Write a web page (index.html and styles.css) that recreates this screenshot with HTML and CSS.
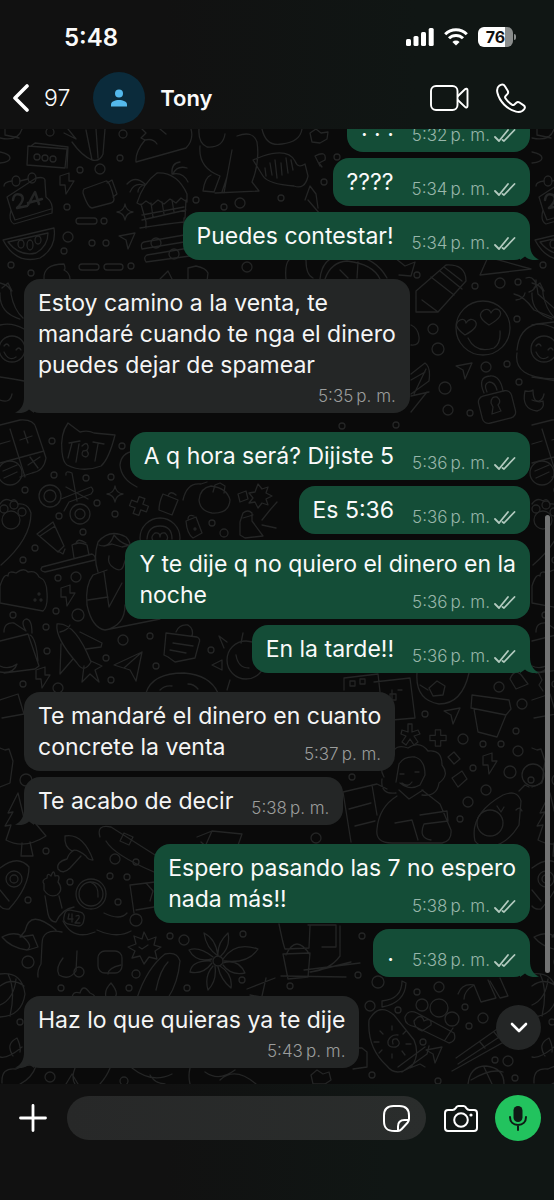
FILE: index.html
```html
<!DOCTYPE html>
<html lang="es">
<head>
<meta charset="utf-8">
<meta name="viewport" content="width=device-width, initial-scale=1">
<title>Tony</title>
<link rel="stylesheet" href="styles.css">
</head>
<body>
<div class="app">
  <svg class="defs" aria-hidden="true">
    <symbol id="ticks" viewBox="0 0 22 15"><path d="M1 9l4 4L14 2M8.500 12l1.500 1L20.500 2" fill="none" stroke="currentColor" stroke-width="1.800" stroke-linecap="round" stroke-linejoin="round"/></symbol>
    <symbol id="tail-out" viewBox="0 0 20 20"><path d="M10 0v4c0 8 3 13 9 15.500-6 1.500-11 0-14-3L0 20V0z" fill="currentColor"/></symbol>
    <symbol id="tail-in" viewBox="0 0 20 20"><path d="M10 0v4c0 8-3 13-9 15.500 6 1.500 11 0 14-3l5 3.500V0z" fill="currentColor"/></symbol>
  </svg>

  <header class="top">
    <div class="status">
      <span class="clock">5:48</span>
      <div class="status-icons">
        <svg width="28" height="18" viewBox="0 0 28 18" fill="#fff"><rect y="11" width="5" height="7" rx="1.500"/><rect x="7.500" y="8" width="5" height="10" rx="1.500"/><rect x="15" y="4" width="5" height="14" rx="1.500"/><rect x="22.700" width="5" height="18" rx="1.500"/></svg>
        <svg width="24" height="18" viewBox="0 0 24 18" fill="none" stroke="#fff" stroke-width="3"><path d="M1.200 6.200a15.300 15.300 0 0 1 21.600 0"/><path d="M5 10.300a9.900 9.900 0 0 1 14 0"/><path d="M12 17.500l-3.600-3.600a5.100 5.100 0 0 1 7.200 0z" fill="#fff" stroke="none"/></svg>
        <span class="battery"><span class="charge">76</span></span>
      </div>
    </div>
    <div class="bar">
      <button class="icon back" aria-label="Atrás"><svg width="18" height="28" viewBox="0 0 18 28" fill="none" stroke="#fff" stroke-width="3.600" stroke-linecap="round" stroke-linejoin="round"><path d="M15 2L3 14l12 12"/></svg><span>97</span></button>
      <span class="avatar"><svg width="18" height="18" viewBox="0 0 18 18" fill="#54b9ec"><circle cx="9" cy="4.500" r="4"/><path d="M1 17.500v-2C1 12.500 5 11 9 11s8 1.500 8 4.500v2z"/></svg></span>
      <h1 class="name">Tony</h1>
      <button class="icon video" aria-label="Videollamada"><svg width="39" height="26" viewBox="0 0 39 26" fill="none" stroke="#fff" stroke-width="1.900" stroke-linejoin="round"><rect x="1" y="1" width="26.500" height="24" rx="5"/><path d="M27.500 11.500l7.500-7.200c1-1 2.500-.8 2.500.8v16c0 1.600-1.500 1.800-2.500.8l-7.500-7.200"/></svg></button>
      <button class="icon" aria-label="Llamar"><svg width="30" height="30" viewBox="0 0 30 30" fill="none" stroke="#fff" stroke-width="2" stroke-linejoin="round"><path d="M3.200 2.800C1 4.500.8 7.200 1.400 9.800 3.500 18.600 11.500 26.500 20 28.600c3.200.8 6.500 0 8.300-2.600.9-1.400.7-2.700-.6-3.600l-4.200-2.900c-1.200-.8-2.200-.7-3.200.2l-2.200 2c-.7.600-1.400.5-2.200 0-2.700-1.800-4.800-3.900-6.500-6.500-.5-.8-.5-1.400.1-2.100l2-2.200c.8-1 .9-2 .2-3.200L8.800 3c-1.200-2.200-3.600-2-5.600-.2z"/></svg></button>
    </div>
  </header>

  <main class="chat">
    <svg class="wallpaper" viewBox="0 129 554 955" preserveAspectRatio="xMidYMin slice" aria-hidden="true">
      <defs>
        <path id="bolt" d="M-6-8L3-11l0 8h5L0 10l-1-9h-5z"/>
        <path id="spark" d="M0-8Q1-1 8 0 1 1 0 8-1 1-8 0-1-1 0-8z"/>
        <path id="plane" d="M-8-5L8-8 1 8-1-1z"/>
        <path id="cross" d="M-3-9h6v6h6v6H3v6h-6V3h-6v-6h6z"/>
        <g id="tile">
          <path d="M0 138q18 4 22-9M5 129v6l14 3M28 146l39 3-2 19-38-3zM31 146l4-3 33 4-1 21"/>
          <circle cx="37" cy="157" r="3"/><circle cx="45" cy="158" r="3"/><circle cx="53" cy="159" r="3"/>
          <path d="M64 133l12 6-8-10M72 142q10 14 20 18l-6-30M92 160q8 2 11-6l2-25M98 158l-2-29M0 152q10 2 10 6t-10 5"/>
          <path d="M4 186q0-4 8-5M20 181l8-2M36 178q10-2 9 4l1 15q8 6 6 16L14 224q-6-3-3-14L7 197zM11 210l4 10 36-11"/>
          <ellipse cx="16" cy="181" rx="4" ry="5"/><ellipse cx="32" cy="178" rx="4" ry="5"/>
          <path d="M13 200q1-8 8-5 5 4-4 13l10-2M28 205l7-13 4 12M28 203l14-4" stroke-width="2.500"/>
          <use href="#bolt" x="66" y="184"/>
          <path d="M84 189l22-8q4 0 8 18 0 3-3 4l-19 5q-4 0-9-15 0-3 1-4zM107 183l5-3 5 14-4 3"/>
          <path d="M137 203q6-20 20-30 20-1 30 21v8l-6-4-5 5-6-4-6 5-6-4-6 5-6-4-5 4zM141 204l5 18M186 200l-1 18M142 215l42-8M142 220l44-10M151 203l2 14M162 202l2 12M172 200l2 12M140 228q25-4 44-6M127 184q8-9 18 0M130 192q4-10 14-7M138 192q0-5 6-7M172 174q-1-11 8-12M173 174q4-9 14-6M173 174q10-2 15 8M146 222v6M184 218v6"/>
          <use href="#spark" x="125" y="212"/>
          <rect x="76" y="218" width="21" height="6" rx="3"/><rect x="79" y="264" width="20" height="6" rx="3"/><rect x="104" y="264" width="19" height="6" rx="3"/>
          <path d="M3 240l51-12q3 20-14 30-24 7-37-18zM8 242l40-9q0 13-12 20-16 4-28-11z"/>
          <ellipse cx="21" cy="244" rx="3" ry="4"/><ellipse cx="30" cy="245" rx="3" ry="5"/><ellipse cx="38" cy="240" rx="3" ry="4"/>
          <use href="#plane" x="127" y="241"/>
          <path d="M144 242q-4 1-2 7l48-8M144 242l46-8M147 255q-4 2-1 7l44-6M147 255l42-7"/><circle cx="156" cy="243" r="5"/><circle cx="174" cy="254" r="5"/>
          <path d="M44 279q-1-15 20-15 2 5 0 6 6 3 6 9M160 279l8-8 4 8M188 279v-11l8-2q10 2 12 7l-1 8"/>
          <path d="M0 283q12 3 11 11 3 16 12 24M0 293q-1 20 20 26M2 288l6-5 4 8M0 325q12-3 24 4M0 377q14 2 24 4M0 400q10 4 12-6"/>
          <circle cx="12" cy="349" r="13"/><path d="M4 346q3-4 5 0M16 350q3-4 5 0M4 352q5 10 12 5"/>
          <path d="M0 425l20-5q14-1 16 8l10 30q-2 13-14 15l-12 4M10 429l15 48M0 463l44-12M0 444l10-3M20 440l12-4M24 431l4 12M28 465l12-8M30 457l8 11"/><circle cx="10" cy="473" r="12"/><path d="M3 471l14-6M4 478l13-6"/>
          <path d="M62 452q-2-18 6-29l12 9q8-2 14 1l21 2q-6 24-14 31-18 7-34-1-4-3-5-13zM69 443l11-2M72 443l-4 15M79 444l-3 18M93 442l11 2M98 444l-3 17"/><path d="M82 446q5-5 6 0t-5 5q-3 5 3 6 4-2 1-6"/>
          <circle cx="50" cy="496" r="11"/><circle cx="50" cy="496" r="6"/><circle cx="80" cy="514" r="10"/><circle cx="80" cy="514" r="5"/>
          <path d="M66 487l22 12M66 475q-1-5 6-2l5 28M61 499l30-12q4 3 0 7l-22 8-5 9"/>
          <use href="#spark" x="115" y="494"/>
          <use href="#cross" transform="translate(139 506) rotate(20)"/>
          <path d="M163 494l15 6-6 15-13-5q0-8 4-16zM168 496q2-6 8-1M137 487q-16-8-17-22 1-12 14-14"/>
          <path d="M0 504q5-7 11-3 4-4 7 3 10-1 13 9 0 26-30 52"/><circle cx="11" cy="520" r="9"/><circle cx="4" cy="509" r="4"/><circle cx="14" cy="505" r="4"/><circle cx="22" cy="512" r="4"/>
          <path d="M37 534l16-12 11 24-6 6zM40 536l15-10M58 551l5 3 2-5M42 567l50-13q4 2 3 6l-50 12q-6-1-3-5zM74 558l-2-13q7-4 15 0l2 10M76 544q1-7 10-1"/>
          <path d="M98 572q-5-15 0-30 12-14 28-5 4 4 5 11-5 8-7 16-2 9-10 4-7-4-5-12M99 545q10 4 15-10 6 8 14 10M104 546l8-2 10 3 8-2M107 570l-14 5q-8 10-6 30 5 23 18 25l55-11M88 600l20-3M104 572l5 35 13-24M105 630q20-4 20-25"/>
          <circle cx="160" cy="538" r="20"/><path d="M147 539q1-13 13-13t12 13M160 546q-13-7-5-13 5-1 5 4 0-5 5-4 7 6-5 13z"/>
          <path d="M183 500q4-18 18-16l6-2M199 500q1-12 12-14 16 2 19 14-1 14-18 13-12-2-13-13zM213 492l2-7 5-2 5 3-1 7M238 494l8-3 2 8-8 3zM258 484l4 5 6-2-2 6 6 3-6 3 2 6-6-2-4 5-3-6-6 1 4-5-4-5 6-1z"/>
          <path d="M186 521l10-4 6 16-9 5q-6-4-7-17zM188 519q0-5 6-3M240 535v-13l3-9q5-4 9 0v8l11 15-18 2zM243 518l10-3M262 520l8-10 7-8M262 525l14 3"/>
          <path d="M0 586q4-13 8-10 0-6 8-3 8-6 12-1 8-2 11 5 8 3 8 16 1 14-4 18l-43-8z"/><circle cx="39" cy="594" r="1"/><circle cx="35" cy="600" r="1"/><circle cx="41" cy="600" r="1"/>
          <use href="#bolt" x="67" y="596"/>
          <path d="M0 641l28-7 11 32-4 3-31 4M30 635q6 3 8 26M0 672q14 2 17-8-8 6-17 2M4 632q0-10 10-9l12 8q-6-10 0-12 6 0 6 14"/>
          <path d="M57 624q18-2 34 38-7 12-14 1-22-25-20-39zM60 632q8-2 10-7M80 632l22 11-1 4-15 2M61 644l-1 30 13-15M84 666l-2 16 8-8 9 8-4-12 7-4-11-5"/>
          <path d="M114 665l28-13-6 29-6-11zM142 652l-18 16M166 633l31 4q4 2 2 6l-4 15-20 4-7-5-4-2zM176 632q3-8 12-7 6 4 4 11M173 643l20 3M170 650l16 3"/>
          <path d="M146 693q6-20 38-20 26 2 34 20M160 690q5-5 12-4M188 684q6 0 10 5"/>
          <circle cx="246" cy="660" r="19"/><path d="M236 655q2 13 13 13M243 633l-2 10M227 642l-8-6 5 12M212 665l10-5v10zM230 680l-3 10"/>
          <use href="#bolt" x="42" y="678"/>
          <path d="M0 700l18-6 6 20-22 4M0 748l5 2 4-1 4 12-3 22-10 4M24 818l-6-25-10 20 5-1-8 14 6-1-5 15q18 10 40-4l-10-12M22 843l-1 13h12l-3-14"/>
          <path d="M65 836q18-3 28 24-5 0-7-4-10-8-14-5-8-4-7-15zM73 851q-4 2-6 8-11 3-9 10 5 6 12-1l11-12"/>
          <path d="M0 868q18-14 29-1 0 20-20 42-6 1-9-3M0 890l9 11"/><circle cx="14" cy="879" r="8"/><circle cx="14" cy="879" r="4"/>
          <circle cx="91" cy="894" r="15"/><circle cx="91" cy="894" r="12"/><path d="M90 882q9 3 8 15"/>
          <path d="M44 884q-3-4 3-6 0-6 4-2 3-8 4 0 6-2 3 6 6 8-1 13-8 3-13-5zM45 896l3 18q2 8 8 8 6-13 18-15M59 896l3 12M104 913q16 8 23 0M97 930q20 9 34 1M63 921q10 20 32 11"/>
          <rect x="64" y="911" width="20" height="14" rx="5" transform="rotate(12 74 918)"/><path d="M69 914l-1 5h5M72 914v8M76 916q4-2 3 2l-4 5h5"/>
          <circle cx="136" cy="920" r="6"/><path d="M134 913l-4-28 25-3M146 883l7 8-3 10M136 910l18-3"/>
          <path d="M56 930q-26-22-31 1l-5 6M2 937q12-6 20-1 12 10 5 14-16-2-25-13zM20 937l13-2 5 12-10 3M62 932q-20-4-20 12l-1 20q-4 6-3 13M63 958q-8 10-4 17 10 6 17-4l1-20"/>
          <path d="M144 932l4 8 8-3-2 8 7 2-6 4 2 8-8-2-5 7-4-8-8 2 3-7-7-4 8-3-2-8 8 3zM139 947l3 2 6-4"/>
          <rect x="98" y="951" width="24" height="22" rx="7"/><path d="M108 974q0-6 13-9M137 998q10-30 28-44 12-3 15 7-2 22-12 37M156 990q4-20 12-28"/>
          <circle cx="218" cy="961" r="5"/><path d="M218 956q-12-8-14-23 12 6 14 23M218 956q-1-13 10-23 3 14-8 24M223 959q12-18 35-10-10 15-34 12M223 963q15-5 22 10-14 3-22-8M220 966q13 8 11 22-10-8-13-21M215 966q2 15-7 24-4-14 5-24M212 963q-9 12-22 9 2-12 21-11M212 959q-16 4-23-9 10-4 24 7"/>
          <path d="M0 974q22-3 25 20-3 22-25 23M0 986q12-9 24 0M0 1005q14-6 16-26M8 974q8 16 2 42M0 1057q8 2 22-10M13 1056q-8-12 4-18 4 8 3 14M2 1083q-1-16 14-14 12-6 20-3-4 12-16 18M72 1000q0-10 8-7 3-10 10 0 8 3 3 7zM106 997q-2-7 5-14 8 10 4 14"/>
          <path d="M247 989l28-11M250 995l22 4M266 978l-4 18M66 1084l6-10 6 10M75 1068q-4 10 0 16M110 1068q-3 8-10 16M132 1068q20 16 40 6M150 1075q4 8 15 9M190 1068q-2 8 0 16M220 1080q15-14 36 4M205 1072q14 10 30-2"/>
          <g class="dots">
            <circle cx="50" cy="132" r="4"/><circle cx="123" cy="134" r="4"/><circle cx="120" cy="158" r="3"/><circle cx="80" cy="170" r="3"/><circle cx="100" cy="169" r="5"/><circle cx="67" cy="207" r="3"/><circle cx="104" cy="221" r="3"/><circle cx="68" cy="237" r="5"/><circle cx="92" cy="243" r="3"/><circle cx="106" cy="243" r="3"/><circle cx="64" cy="251" r="3"/><circle cx="11" cy="265" r="3"/><circle cx="31" cy="273" r="3"/><circle cx="131" cy="266" r="3"/>
            <circle cx="52" cy="441" r="3"/><circle cx="122" cy="446" r="3"/><circle cx="54" cy="475" r="3"/><circle cx="86" cy="478" r="3"/><circle cx="111" cy="477" r="3"/><circle cx="25" cy="490" r="3"/><circle cx="97" cy="503" r="3"/><circle cx="59" cy="516" r="3"/><circle cx="115" cy="514" r="3"/><circle cx="83" cy="532" r="3"/><circle cx="35" cy="548" r="3"/><circle cx="23" cy="560" r="3"/><circle cx="58" cy="578" r="3"/><circle cx="76" cy="577" r="5"/><circle cx="13" cy="615" r="3"/><circle cx="56" cy="611" r="3"/><circle cx="78" cy="615" r="6"/><circle cx="46" cy="627" r="3"/><circle cx="123" cy="640" r="5"/><circle cx="150" cy="636" r="3"/><circle cx="47" cy="651" r="3"/><circle cx="106" cy="658" r="3"/><circle cx="156" cy="666" r="3"/><circle cx="211" cy="650" r="3"/><circle cx="23" cy="684" r="3"/><circle cx="58" cy="688" r="5"/><circle cx="111" cy="680" r="3"/><circle cx="212" cy="523" r="3"/><circle cx="224" cy="533" r="4"/><circle cx="195" cy="529" r="1"/>
            <circle cx="26" cy="780" r="6"/><circle cx="46" cy="851" r="3"/><circle cx="115" cy="859" r="5"/><circle cx="136" cy="862" r="3"/><circle cx="110" cy="876" r="3"/><circle cx="127" cy="877" r="3"/><circle cx="70" cy="882" r="3"/><circle cx="28" cy="900" r="3"/><circle cx="118" cy="902" r="3"/><circle cx="170" cy="936" r="3"/><circle cx="184" cy="940" r="5"/><circle cx="28" cy="962" r="6"/><circle cx="79" cy="972" r="5"/><circle cx="136" cy="974" r="4"/><circle cx="61" cy="988" r="3"/><circle cx="129" cy="988" r="3"/><circle cx="187" cy="988" r="3"/><circle cx="242" cy="980" r="3"/><circle cx="243" cy="934" r="3"/><circle cx="50" cy="1077" r="5"/><circle cx="124" cy="1081" r="4"/><circle cx="20" cy="1022" r="3"/>
          </g>
        </g>
      </defs>
      <g class="doodles">
        <use href="#tile"/><use href="#tile" x="532"/>
        <path d="M142 129l4 4-5 5 4 2q-10 12-9 22l50-14q8-8 5-19M145 140q8-2 12 4M160 129l6 5M199 129q-1 14 8 18 16 1 18-13M200 146q-2 22 20 30M220 176l-6 16-11-1q2-14 8-16M227 177l-5 15M232 150l-8 43M237 136q16-6 20 6 3 20-5 40l7 9-44 2M253 160l10-4q25-8 32 5 3 8 10 3l3 12q-3 14-14 10-26-2-31-10z"/>
        <path d="M265 168l1 8M270 163l2 12M275 160l2 18M281 163l1 12M286 158l2 15M291 160l2 10M262 129q4 18 20 15 18-2 20-15M310 133l6-4 5 4 7-1-1 7-7 4-8-1zM315 156q12-6 10 4l-6 3 3 4M315 156l5 10M305 200l5-14 6 8 2 14M308 200l12 14"/>
        <path d="M416 312v-21l30-26q20-1 20 16l-28 31zM438 312l-16-12M440 271l22 18M431 277l23 18M444 267l18 14"/>
        <circle cx="483" cy="328" r="27"/><path d="M465 335q-14-10-5-15 5-2 6 3 4-6 9-2 5 6-10 14zM489 325q-14-9-5-15 5-2 7 3 3-6 8-3 6 6-10 15zM468 338q8 16 26 10 7-5 6-17M480 275l8-18 43 12zM514 294q10 2 20 16l20 8M516 300q8-1 9-7M526 278q10-4 12 16l16 14M529 292q8-2 7-12"/>
        <path d="M517 350q2-22 20-26l17-2M517 353q-4 25 37 26M411 325q7 3 8 12t-8 8M411 374l14-11q6 4 4 18l-18 13M411 380l14-8M414 394l12-25M427 392l-16 20M411 396l18-4"/>
        <rect x="480" y="393" width="34" height="28" rx="6" transform="rotate(-14 497 407)"/><path d="M484 393q-7-16 6-17 10-1 13 15M487 392q-4-8 2-10 6 0 8 8M491 403q0-7 6-6 5 4 1 8l3 6-9 3 1-7z"/><path d="M525 391q-4 18 12 20 8-2 6-10-10 4-10-11-2 2-8 1z"/>
        <use href="#plane" x="464" y="371"/>
        <path d="M320 279q2-23 25-25 30 2 42 24M325 279q6-17 22-18 26 3 33 18M358 262l-1 16M340 270l8 8M286 279q-3-30 20-19 0 15 7 18M395 258l10 8 10-4-4 14-12-1"/>
        <path d="M344 690v-12l34-4 2 18M350 681h5v5h-5zM360 679h5v5h-5zM374 682l36-4 5 40-23 2v-30M390 694h6v6h-6zM398 690h4M417 673q-2 27 22 31 23 0 30-31M429 688l8-7 8 5-2 9-10 1zM420 685l8 5M472 695l37 5 2 9-5 6-35-7zM474 709l4 23 19 5 9-22M510 679q5-12 12-3l6 8-12 5zM538 672l4 8-3 5 4 6"/>
        <use href="#plane" x="452" y="716"/><use href="#cross" transform="translate(438 738) scale(.9)"/><path d="M408 724v8l-6-2-1 4 5 2-4 6 4 3 4-6 4 6 4-3-4-6 6-2-2-4-6 2v-8z"/>
        <path d="M384 777q-8-14 8-22 3-12 16-7 12-8 20 3 14-2 14 14 8 10-3 18-2 14-17 12M396 793q-16 2-14-14M396 782l3-18q5-8 16-7 10 3 10 18l-5 10q-10 6-20-2M400 774h4M415 772h4M402 783q6 5 10-1M399 790l10 9 14-9M397 796q-18 11-20 33-2 14 15 14h50q10-2 9-13l-11-26-18-14M343 792l34-8 10 5M343 792l8 50M372 785l5 30M349 809l22-6M355 826l20-5M420 815l27-4 1 10-24 3q-6 14 7 16M395 823l17-3 6 20"/>
        <path d="M475 841q-6-27 28-46 14-6 18 6l-2 24q-12 20-30 22-10 0-14-6zM519 791l6-6 4 2M516 810q4-4 6 1M497 806l4 6 3-5"/><circle cx="490" cy="823" r="13"/><circle cx="533" cy="775" r="11"/><circle cx="531" cy="780" r="3"/><use href="#bolt" x="489" y="764"/><path d="M448 757l6-5 6 7-6 5zM452 778l10-7 5 8-9 8z"/>
        <path d="M100 837q-4-13 11-10l44 28M106 841q8 14 48 31M124 833l-4 8 9 4 4-8zM197 837l15-6 30 3-5 14M201 842l10 9M212 831l-8 18M279 924q4 20 6 25l24-1 1-22M308 925h28v22h-14M340 926v30q-10 14-30 16M304 970l56-7M283 954l27-1-2 24-20 2zM286 955q10-22 24 0M311 972l40-10M346 977l-65-1"/>
        <path d="M369 1020q10-18 25-5l20 25q6 14-2 26-16 12-25 0-20-18-18-46zM398 1067l27-20M402 1072l25-18 2-8M410 1068l10-4 5 3"/><path d="M393 1044q-2-6 4-5 5 5-1 8-9 1-8-6 3-7 10-6M392 1030v-4M403 1034l3-3M406 1044h5M402 1051l3 4M392 1054v4M382 1050l-3 3M379 1042h-5M383 1034l-3-3"/>
        <path d="M405 1017q3-8 12-4l37 20q3 8-5 10l-33-16q-12-2-11-10zM414 1021q7-9 10 0 8-4 7 4l-9 6q-8-3-8-10zM445 1040l8-12M456 1058l54-38M458 1064l52-34M452 1071l68-38M480 1042l5 6M494 1032l5 6"/>
        <circle cx="422" cy="1005" r="6"/><circle cx="439" cy="1008" r="9"/><circle cx="452" cy="1019" r="7"/><use href="#plane" x="434" y="1055"/>
        <path d="M382 1001q20-2 20-20l4 2q-1 20-24 24zM458 994q4-11 16-9M464 999q0-8 10-14M474 985l7 17 15-4-8-18M490 981l10 17 8-2-8-18M468 1084q2-18 18-18 18 2 18 18M471 1080q20-12 32-8M484 1067l8 17M311 1075l6-5 6 4 6-2 2 8-6 4h-12zM354 1048l8 0 5 4 0 15-14 2"/>
        <g class="dots"><circle cx="196" cy="200" r="3"/><circle cx="224" cy="207" r="3"/><circle cx="240" cy="203" r="5"/><circle cx="247" cy="267" r="5"/><circle cx="281" cy="198" r="3"/><circle cx="324" cy="182" r="3"/><circle cx="337" cy="157" r="3"/><circle cx="417" cy="275" r="3"/><circle cx="475" cy="286" r="3"/><circle cx="500" cy="283" r="5"/><circle cx="518" cy="282" r="3"/><circle cx="517" cy="319" r="3"/><circle cx="433" cy="329" r="5"/><circle cx="438" cy="349" r="6"/><circle cx="486" cy="367" r="5"/><circle cx="507" cy="364" r="3"/><circle cx="445" cy="388" r="6"/><circle cx="448" cy="410" r="5"/><circle cx="470" cy="413" r="3"/><circle cx="519" cy="382" r="3"/><circle cx="342" cy="426" r="3"/><circle cx="396" cy="425" r="3"/><circle cx="425" cy="714" r="3"/><circle cx="463" cy="739" r="5"/><circle cx="483" cy="744" r="3"/><circle cx="501" cy="744" r="3"/><circle cx="518" cy="751" r="5"/><circle cx="522" cy="704" r="5"/><circle cx="516" cy="731" r="3"/><circle cx="499" cy="687" r="5"/><circle cx="473" cy="768" r="3"/><circle cx="510" cy="772" r="6"/><circle cx="486" cy="790" r="5"/><circle cx="468" cy="802" r="5"/><circle cx="460" cy="819" r="3"/><circle cx="316" cy="838" r="5"/><circle cx="352" cy="777" r="3"/><circle cx="362" cy="936" r="3"/><circle cx="358" cy="975" r="3"/><circle cx="378" cy="982" r="6"/><circle cx="370" cy="1006" r="5"/><circle cx="398" cy="1010" r="3"/><circle cx="417" cy="992" r="3"/><circle cx="439" cy="987" r="5"/><circle cx="465" cy="1007" r="3"/><circle cx="469" cy="1026" r="3"/><circle cx="483" cy="1018" r="5"/><circle cx="423" cy="1042" r="3"/><circle cx="495" cy="1060" r="3"/><circle cx="508" cy="1061" r="5"/><circle cx="515" cy="1078" r="3"/><circle cx="438" cy="1081" r="3"/><circle cx="372" cy="1075" r="3"/><circle cx="290" cy="986" r="3"/></g>
      </g>
    </svg>

    <div class="messages">
      <div class="group out">
        <div class="msg line"><p>. . .</p><span class="time">5:32&#8201;p. m.<svg><use href="#ticks"/></svg></span></div>
        <div class="msg line"><p>????</p><span class="time">5:34&#8201;p. m.<svg><use href="#ticks"/></svg></span></div>
        <div class="msg line"><p>Puedes contestar!</p><span class="time">5:34&#8201;p. m.<svg><use href="#ticks"/></svg></span><svg class="tail"><use href="#tail-out"/></svg></div>
      </div>
      <div class="group in">
        <div class="msg below"><p>Estoy camino a la venta, te<br>mandaré cuando te nga el dinero<br>puedes dejar de spamear</p><span class="time">5:35&#8201;p. m.</span><svg class="tail"><use href="#tail-in"/></svg></div>
      </div>
      <div class="group out">
        <div class="msg line"><p>A q hora será? Dijiste 5</p><span class="time">5:36&#8201;p. m.<svg><use href="#ticks"/></svg></span></div>
        <div class="msg line"><p>Es 5:36</p><span class="time">5:36&#8201;p. m.<svg><use href="#ticks"/></svg></span></div>
        <div class="msg shared"><p>Y te dije q no quiero el dinero en la<br>noche</p><span class="time">5:36&#8201;p. m.<svg><use href="#ticks"/></svg></span></div>
        <div class="msg line"><p>En la tarde!!</p><span class="time">5:36&#8201;p. m.<svg><use href="#ticks"/></svg></span><svg class="tail"><use href="#tail-out"/></svg></div>
      </div>
      <div class="group in">
        <div class="msg shared"><p>Te mandaré el dinero en cuanto<br>concrete la venta</p><span class="time">5:37&#8201;p. m.</span></div>
        <div class="msg line"><p>Te acabo de decir</p><span class="time">5:38&#8201;p. m.</span><svg class="tail"><use href="#tail-in"/></svg></div>
      </div>
      <div class="group out">
        <div class="msg shared"><p>Espero pasando las 7 no espero<br>nada más!!</p><span class="time">5:38&#8201;p. m.<svg><use href="#ticks"/></svg></span></div>
        <div class="msg line"><p>.</p><span class="time">5:38&#8201;p. m.<svg><use href="#ticks"/></svg></span><svg class="tail"><use href="#tail-out"/></svg></div>
      </div>
      <div class="group in">
        <div class="msg below"><p>Haz lo que quieras ya te dije</p><span class="time">5:43&#8201;p. m.</span><svg class="tail"><use href="#tail-in"/></svg></div>
      </div>
    </div>
    <span class="thumb"></span>
    <button class="icon jump" aria-label="Ir al final"><svg width="18" height="11" viewBox="0 0 18 11" fill="none" stroke="#fff" stroke-width="2.600" stroke-linecap="round" stroke-linejoin="round"><path d="M2 2l7 7 7-7"/></svg></button>
  </main>

  <footer class="composer">
    <button class="icon add" aria-label="Adjuntar"><svg width="28" height="28" viewBox="0 0 28 28" stroke="#fff" stroke-width="2.800" stroke-linecap="round"><path d="M14 1.500v25M1.500 14h25"/></svg></button>
    <div class="field">
      <input type="text" aria-label="Mensaje">
      <button class="icon" aria-label="Stickers"><svg width="27" height="27" viewBox="0 0 27 27" fill="none" stroke="#fff" stroke-width="2" stroke-linejoin="round"><path d="M15 26h-3.500C4 26 1 23 1 16v-5.500C1 4 4 1 10.500 1h6C23 1 26 4 26 10.500V14c0 1.500-.4 2.500-1.500 3.700l-6 6.500C17.400 25.400 16.500 26 15 26z"/><path d="M15 26v-4.500c0-4.500 2-6.500 6.500-6.500H26"/></svg></button>
    </div>
    <button class="icon camera" aria-label="Cámara"><svg width="34" height="27" viewBox="0 0 34 27" fill="none" stroke="#fff" stroke-width="2" stroke-linejoin="round"><path d="M4 5h4.500c1.500 0 2.300-.5 3-1.600l.8-1.200C12.900 1.400 13.500 1 14.500 1h5c1 0 1.600.4 2.200 1.200l.8 1.200c.7 1.100 1.500 1.600 3 1.600H30c2 0 3 1 3 3v15c0 2-1 3-3 3H4c-2 0-3-1-3-3V8c0-2 1-3 3-3z"/><circle cx="17" cy="15" r="6.800"/><circle cx="27" cy="10" r="1.600" fill="#fff" stroke="none"/></svg></button>
    <button class="icon mic" aria-label="Grabar audio"><svg width="18" height="26" viewBox="0 0 18 26" fill="none" stroke="#0f1a15" stroke-width="2" stroke-linecap="round"><rect x="4.500" y="1" width="9" height="16" rx="4.500" fill="#0f1a15" stroke="none"/><path d="M1 12c0 5 3.300 8 8 8s8-3 8-8M9 20v5"/></svg></button>
  </footer>
</div>
</body>
</html>
```
FILE: styles.css
```css
* { box-sizing: border-box; }

body {
  margin: 0;
  background: #111;
  color: #fafafa;
  font-family: Inter, "Liberation Sans", sans-serif;
}

.app {
  display: flex;
  flex-direction: column;
  height: 100vh;
}

.defs { position: absolute; width: 0; height: 0; }

.icon {
  flex: none;
  display: flex;
  align-items: center;
  justify-content: center;
  padding: 0;
  border: 0;
  background: none;
  color: inherit;
  font: inherit;
}

/* Header */
.top {
  flex: none;
  padding-bottom: 5px;
  background: linear-gradient(90deg, #111 30%, #101614 75%);
}

.status {
  display: flex;
  align-items: center;
  justify-content: space-between;
  height: 72px;
  padding: 2px 41px 0 64px;
}

.clock { font-size: 24px; font-weight: 600; }

.status-icons { display: flex; align-items: center; gap: 10px; }

.battery {
  position: relative;
  width: 35px;
  height: 20px;
  border-radius: 6px;
  background: linear-gradient(90deg, #fff 77%, #8a8d8c 77%);
}

.battery::after {
  content: "";
  position: absolute;
  top: 7px;
  right: -3px;
  width: 2px;
  height: 6px;
  border-radius: 0 2px 2px 0;
  background: #8a8d8c;
}

.charge {
  display: block;
  color: #111;
  font-size: 16px;
  font-weight: 700;
  line-height: 20px;
  text-align: center;
}

.bar {
  display: flex;
  align-items: center;
  height: 52px;
  padding: 0 28px 0 12px;
}

.back { gap: 14px; font-size: 23px; font-weight: 300; }

.avatar {
  display: flex;
  align-items: center;
  justify-content: center;
  width: 52px;
  height: 52px;
  margin-left: 23px;
  border-radius: 50%;
  background: #0b2b3b;
}

.name {
  flex: 1;
  margin: 0 0 0 15px;
  font-size: 22px;
  font-weight: 600;
}

.video { margin-right: 27px; }

/* Conversation */
.chat {
  position: relative;
  flex: 1;
  min-height: 0;
  overflow: hidden;
  background: #0a0a0a;
}

.wallpaper { position: absolute; inset: 0; width: 100%; height: 100%; }

.doodles {
  fill: none;
  stroke: #242525;
  stroke-width: 1.3;
  stroke-linejoin: round;
  stroke-linecap: round;
}

.messages {
  position: relative;
  display: flex;
  flex-direction: column;
  justify-content: flex-end;
  gap: 19px;
  height: 100%;
  padding: 0 24px 16px;
}

.group { display: flex; flex-direction: column; gap: 6px; }
.in { align-items: flex-start; }
.out { align-items: flex-end; }

.msg {
  position: relative;
  padding: 9px 14px 8px;
  border-radius: 16px;
  font-size: 23px;
  line-height: 31px;
}

.in .msg { background: #242626; color: #f5f5f5; }
.out .msg { background: #144d37; }

.msg p { margin: 0; white-space: nowrap; }

.line { display: flex; align-items: flex-end; gap: 18px; }
.shared { display: grid; }
.shared p, .shared .time { grid-area: 1 / 1; }
.shared .time { align-self: end; justify-self: end; }
.below { display: flex; flex-direction: column; }
.below .time { align-self: flex-end; margin-top: 5px; }

.time {
  display: flex;
  align-items: center;
  gap: 4px;
  height: 20px;
  margin-bottom: -1px;
  color: #9b9d9c;
  font-size: 17px;
  font-weight: 300;
  line-height: 20px;
  white-space: nowrap;
}

.out .time { color: #98b6aa; }
.time svg { width: 22px; height: 15px; color: #b3cabf; }

.tail { position: absolute; bottom: 0; width: 20px; height: 20px; }
.out .tail { right: -10px; color: #144d37; }
.in .tail { left: -10px; color: #242626; }

.thumb {
  position: absolute;
  top: 40.4%;
  right: 4px;
  width: 5px;
  height: 48%;
  border-radius: 3px;
  background: #727373;
}

.jump {
  position: absolute;
  right: 13px;
  bottom: 34px;
  width: 45px;
  height: 45px;
  border-radius: 50%;
  background: #242626;
}

/* Composer */
.composer {
  flex: none;
  display: flex;
  align-items: center;
  padding: 11px 13px 59px 19px;
  background: linear-gradient(90deg, #111 30%, #101614 70%);
}

.field {
  flex: 1;
  display: flex;
  align-items: center;
  min-width: 0;
  height: 44px;
  margin: 0 18px 0 20px;
  padding: 0 16px 0 20px;
  border-radius: 22px;
  background: linear-gradient(90deg, #272828, #2a2d2c);
}

.field input {
  flex: 1;
  min-width: 0;
  border: 0;
  outline: 0;
  background: none;
  color: inherit;
  font: inherit;
  font-size: 23px;
}

.camera { margin-right: 17px; }

.mic {
  width: 46px;
  height: 46px;
  border-radius: 50%;
  background: #22c35e;
}
```
